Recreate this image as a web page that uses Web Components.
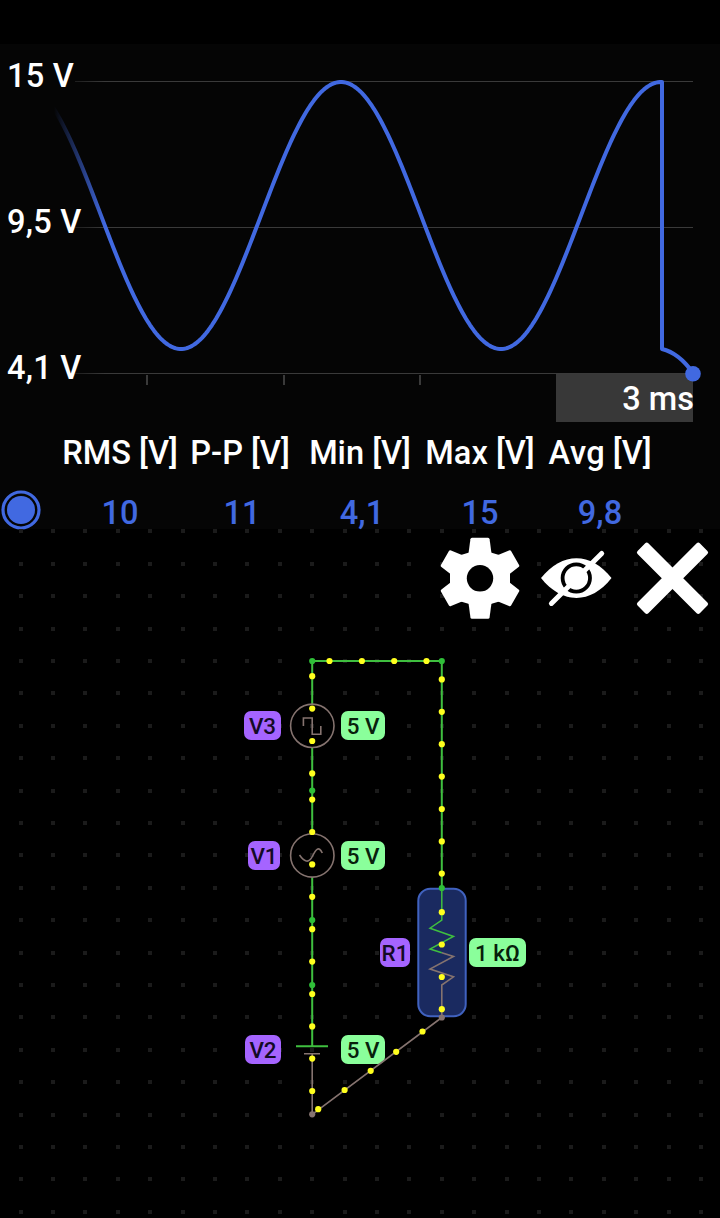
<!DOCTYPE html>
<html lang="en">
<head>
<meta charset="utf-8">
<meta name="viewport" content="width=device-width, initial-scale=1">
<title>Circuit simulator</title>
<style>
	body {
		margin: 0;
		background: #000;
	}
</style>
</head>
<body>
<circuit-app>
	<scope-panel slot="scope">
		<scope-chart high="15 V" mid="9,5 V" low="4,1 V" span="3 ms"></scope-chart>
		<scope-stats>
			<scope-stat label="RMS [V]">10</scope-stat>
			<scope-stat label="P-P [V]" indent="4">11</scope-stat>
			<scope-stat label="Min [V]" indent="4">4,1</scope-stat>
			<scope-stat label="Max [V]">15</scope-stat>
			<scope-stat label="Avg [V]">9,8</scope-stat>
		</scope-stats>
	</scope-panel>
	<circuit-canvas>
		<circuit-tag x="244" y="182" w="37">V3</circuit-tag>
		<circuit-tag x="341" y="182" w="44" kind="value">5 V</circuit-tag>
		<circuit-tag x="248" y="312" w="32">V1</circuit-tag>
		<circuit-tag x="341" y="312" w="44" kind="value">5 V</circuit-tag>
		<circuit-tag x="380" y="409" w="30">R1</circuit-tag>
		<circuit-tag x="469" y="409" w="57" kind="value">1 kΩ</circuit-tag>
		<circuit-tag x="245" y="506" w="36">V2</circuit-tag>
		<circuit-tag x="341" y="506" w="44" kind="value">5 V</circuit-tag>
		<tool-bar slot="tools"></tool-bar>
	</circuit-canvas>
</circuit-app>

<script>
class CircuitApp extends HTMLElement {
	constructor() {
		super();
		this.attachShadow({ mode: "open" });
		this.shadowRoot.innerHTML = `
		<style>
			:host {
				--scope-color: #4169e1;
				display: flex;
				flex-direction: column;
				width: 720px;
				height: 1218px;
				padding-top: 44px;
				box-sizing: border-box;
				overflow: hidden;
				background: #000;
				color: #fff;
				font: 500 32.6px/38px Roboto, "Liberation Sans", sans-serif;
				font-kerning: none;
			}
		</style>
		<slot name="scope"></slot>
		<slot></slot>
	`;
	}
}

class ScopePanel extends HTMLElement {
	constructor() {
		super();
		this.attachShadow({ mode: "open" });
		this.shadowRoot.innerHTML = `
		<style>
			:host {
				display: flex;
				flex-direction: column;
				flex: none;
				height: 485px;
				background: #050505;
			}
		</style>
		<slot></slot>
	`;
	}
}

class ScopeChart extends HTMLElement {
	constructor() {
		super();
		this.attachShadow({ mode: "open" });
		this.shadowRoot.innerHTML = `
		<style>
			:host {
				display: grid;
				grid-template-columns: 720px;
				grid-template-rows: 330px 48px;
				flex: none;
			}
			svg {
				grid-area: 1 / 1 / 3 / 2;
				z-index: 1;
			}
			.axis {
				grid-area: 1 / 1 / 3 / 2;
				display: flex;
				flex-direction: column;
				gap: 108px;
				padding: 13px 0 0 7px;
				letter-spacing: 0.2px;
			}
			.span {
				grid-area: 2 / 1;
				justify-self: end;
				width: 138px;
				margin-right: 26px;
				background: linear-gradient(to right, #383838 137px, transparent 0);
				text-align: right;
				line-height: 50px;
			}
		</style>
		<div class="axis"><span>${this.getAttribute("high")}</span><span>${this.getAttribute("mid")}</span><span>${this.getAttribute("low")}</span></div>
		<div class="span">${this.getAttribute("span")}</div>
		<svg width="720" height="378" viewBox="0 44 720 378" fill="none">
			<defs>
				<linearGradient id="trace" gradientUnits="userSpaceOnUse" x1="54" y1="0" x2="105" y2="0">
					<stop offset="0" stop-color="#4169e1" stop-opacity="0"/>
					<stop offset="1" stop-color="#4169e1"/>
				</linearGradient>
				<linearGradient id="rule" gradientUnits="userSpaceOnUse" x1="50" y1="0" x2="105" y2="0">
					<stop offset="0" stop-color="#3a3a3a" stop-opacity="0"/>
					<stop offset="1" stop-color="#3a3a3a"/>
				</linearGradient>
			</defs>
			<path d="M75 81h618v1H75zM75 227h618v1H75zM75 373h618v1H75z" fill="url(#rule)"/>
			<path d="M147 375v10M284 375v10M420 375v10" stroke="#3a3a3a" stroke-width="2"/>
			<path d="${this.#trace()}" stroke="url(#trace)" stroke-width="4" stroke-linejoin="round"/>
			<circle cx="693" cy="373.7" r="7.8" fill="#4169e1"/>
		</svg>
	`;
	}

	// sine sampled every 2px, then the drop of the square source
	#trace() {
		const points = [];
		for (let x = 50; x <= 662; x += 2) {
			const y = 215.5 - 133.5 * Math.cos((2 * Math.PI * (x - 341)) / 320);
			points.push(`${x} ${y.toFixed(2)}`);
		}
		return `M${points.join("L")}L662 349Q679 353 693 373`;
	}
}

class ScopeStats extends HTMLElement {
	constructor() {
		super();
		this.attachShadow({ mode: "open" });
		this.shadowRoot.innerHTML = `
		<style>
			:host {
				display: grid;
				grid-template-columns: 60px repeat(5, 120px);
				padding-top: 12px;
			}
			svg {
				align-self: end;
				margin-bottom: 1px;
			}
		</style>
		<svg width="42" height="42" fill="none">
			<circle cx="21" cy="21" r="18" stroke="#4169e1" stroke-width="3.2"/>
			<circle cx="21" cy="21" r="14" fill="#4169e1"/>
		</svg>
		<slot></slot>
	`;
	}
}

class ScopeStat extends HTMLElement {
	constructor() {
		super();
		this.attachShadow({ mode: "open" });
		this.shadowRoot.innerHTML = `
		<style>
			:host {
				display: flex;
				flex-direction: column;
				align-items: center;
				gap: 22px;
				white-space: nowrap;
			}
			.value {
				padding-left: ${this.getAttribute("indent") || 0}px;
				color: var(--scope-color);
			}
		</style>
		<span>${this.getAttribute("label")}</span>
		<span class="value"><slot></slot></span>
	`;
	}
}

class CircuitCanvas extends HTMLElement {
	#step = 32.4;

	constructor() {
		super();
		this.attachShadow({ mode: "open" });
		this.shadowRoot.innerHTML = `
		<style>
			:host {
				position: relative;
				display: grid;
				grid-template: 689px / 720px;
			}
			svg, .tools {
				grid-area: 1 / 1;
			}
			.tools, .wires {
				z-index: 1;
			}
		</style>
		<svg width="720" height="689" viewBox="0 529 720 689" fill="#1b1b1b">${this.#dots()}</svg>
		<slot></slot>
		<svg class="wires" width="720" height="689" viewBox="0 529 720 689" fill="none">
			<rect x="418.3" y="888.7" width="47.4" height="127.6" rx="12" fill="#1a2a60" stroke="#4062bf" stroke-width="2"/>
			<g stroke="#3fbf3f" stroke-width="2">
				<path d="M312.2 704V661H441.8V888M312.2 747.5V834M312.2 877V1046M296 1046.2h32"/>
				<path d="M441.8 888V920L430 928.2L453.5 936.5L430 949L441.8 952.8" stroke-width="1.5"/>
			</g>
			<g stroke="#85736f" stroke-width="1.6">
				<path d="M441.8 952.8L453.5 956.5L430 969L453.5 976.8L441.8 985V1017.5L312.2 1114.3V1054M304 1053.8h16"/>
				<circle cx="312.3" cy="725.8" r="21.7"/>
				<circle cx="312.3" cy="855.4" r="21.7"/>
				<path d="M303.4 726V718H312.2V734.2H320.8V726"/>
				<path d="M299.5 855C303 860 308 865 312.3 856.5C315.5 850 318.5 845 322.3 853"/>
			</g>
			${this.#nodes([[312.2, 661], [441.8, 661], [312.2, 790.6], [312.2, 920], [312.2, 985], [441.8, 888]], "#2fbf38")}
			${this.#nodes([[441.8, 1017.5], [312.2, 1114.3]], "#85736f")}
			${this.#nodes(this.#charges(), "#ffff1e")}
		</svg>
		<div class="tools"><slot name="tools"></slot></div>
	`;
	}

	#dots() {
		let dots = "";
		for (let row = -4; row <= 17; row++) {
			for (let col = -9; col <= 12; col++) {
				const x = Math.round(312.2 + col * this.#step) - 2;
				const y = Math.round(661 + row * this.#step) - 2;
				dots += `<rect x="${x}" y="${y}" width="4" height="4"/>`;
			}
		}
		return dots;
	}

	#charges() {
		const left = [676.2, 708.6, 741, 773.4, 799.6, 832, 864.4, 896.8, 929.2, 961.6, 994, 1026.4, 1058.6, 1091];
		const right = [679.4, 711.8, 744.2, 776.6, 809, 841.4, 873.6, 912.2, 944.5, 977, 1009.2];
		return [
			...[329.5, 361.9, 394.2, 426.5].map((x) => [x, 661]),
			...left.map((y) => [312.2, y]),
			...right.map((y) => [441.8, y]),
			[422.5, 1031.5], [396.2, 1051.8], [370.7, 1070.8], [344.6, 1090], [318.2, 1109.2],
		];
	}

	#nodes(points, fill) {
		return points.map(([x, y]) => `<circle cx="${x}" cy="${y}" r="3.1" fill="${fill}"/>`).join("");
	}
}

class CircuitTag extends HTMLElement {
	constructor() {
		super();
		this.attachShadow({ mode: "open" });
		this.shadowRoot.innerHTML = `
		<style>
			:host {
				position: absolute;
				left: ${this.getAttribute("x")}px;
				top: ${this.getAttribute("y")}px;
				width: ${this.getAttribute("w")}px;
				height: 29px;
				border-radius: 7px;
				background: #a564ff;
				color: #140a26;
				font-size: 22.4px;
				line-height: 31px;
				text-align: center;
				white-space: nowrap;
			}
			:host([kind="value"]) {
				background: #8aff9b;
				color: #07200b;
			}
		</style>
		<slot></slot>
	`;
	}
}

class ToolBar extends HTMLElement {
	constructor() {
		super();
		this.attachShadow({ mode: "open" });
		const tooth = "M-11.6 -24L-9.6 -39Q-9.4 -40.5 -8 -40.5H8Q9.4 -40.5 9.6 -39L11.6 -24Z";
		const teeth = [0, 60, 120, 180, 240, 300].map((a) => `<path d="${tooth}" transform="rotate(${a})"/>`).join("");
		this.shadowRoot.innerHTML = `
		<style>
			:host {
				display: flex;
				justify-content: flex-end;
				padding-top: 1px;
			}
		</style>
		<svg width="96" height="96" viewBox="-48 -48.3 96 96" fill="#fff">
			${teeth}
			<path d="M-30 -6L-20 -23L-10 -26H10L20 -23L30 -6V6L20 23L10 26H-10L-20 23L-30 6Z"/>
			<circle r="13.2" fill="#000"/>
		</svg>
		<svg width="96" height="96" viewBox="-48 -48 96 96" fill="none">
			<path d="M-35 0C-14 -26.5 15 -26.5 35.5 0C15 26.5 -14 26.5 -35 0Z" fill="#fff"/>
			<circle cx=".3" r="13.7" stroke="#000" stroke-width="3.8"/>
			<path d="M25.7 -24.6L-24.6 25.4" stroke="#fff" stroke-width="5" stroke-linecap="round"/>
		</svg>
		<svg width="96" height="96" viewBox="-48 -48 96 96" fill="#fff">
			<g transform="translate(.5 .3) rotate(45)">
				<rect x="-44" y="-7.6" width="88" height="15.2" rx="2.2"/>
				<rect x="-7.6" y="-44" width="15.2" height="88" rx="2.2"/>
			</g>
		</svg>
	`;
	}
}

customElements.define("circuit-app", CircuitApp);
customElements.define("scope-panel", ScopePanel);
customElements.define("scope-chart", ScopeChart);
customElements.define("scope-stats", ScopeStats);
customElements.define("scope-stat", ScopeStat);
customElements.define("circuit-canvas", CircuitCanvas);
customElements.define("circuit-tag", CircuitTag);
customElements.define("tool-bar", ToolBar);
</script>
</body>
</html>
